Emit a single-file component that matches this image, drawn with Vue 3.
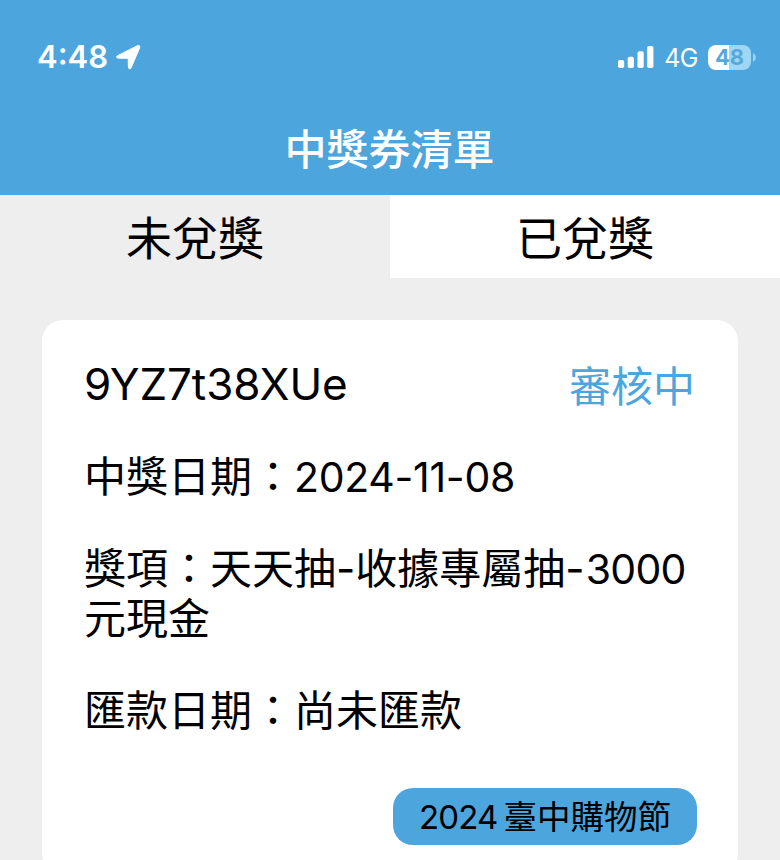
<template>
    <div class="page">
        <header class="header">
            <div class="status-bar">
                <div class="status-left">
                    <span class="clock">4:48</span>
                    <svg class="location" width="25" height="25" viewBox="0 0 25 25">
                        <path
                            d="M1.4 10.8 L21.2 0.8 Q24.6 -0.4 23.6 3 L15 23 Q13.4 25.4 12.4 22.4 L12.2 14.2 Q12.2 13.3 11.3 13.3 L2.2 13.2 Q-0.8 12.4 1.4 10.8 Z"
                            fill="#fff" stroke="#fff" stroke-width="1" stroke-linejoin="round" />
                    </svg>
                </div>
                <div class="status-right">
                    <svg class="signal" width="36" height="22" viewBox="0 0 36 22">
                        <rect x="0" y="14" width="6.2" height="8" rx="1.8" fill="#fff" />
                        <rect x="9.7" y="10.8" width="6.2" height="11.2" rx="1.8" fill="#fff" />
                        <rect x="19.5" y="5.2" width="6.2" height="16.8" rx="1.8" fill="#fff" />
                        <rect x="29.2" y="0" width="6.2" height="22" rx="1.8" fill="#fff" />
                    </svg>
                    <span class="network">4G</span>
                    <div class="battery">
                        <span class="battery-level">{{ battery }}</span>
                    </div>
                    <svg class="battery-cap" width="3" height="9" viewBox="0 0 3 9">
                        <path d="M0 0 Q2.8 1.6 2.8 4.5 Q2.8 7.4 0 9 Z" fill="#9ed7f3" />
                    </svg>
                </div>
            </div>
            <h1 class="title">中獎券清單</h1>
        </header>

        <nav class="tabs">
            <button v-for="t in tabs" :key="t.id" class="tab" :class="{ active: t.id === current }" type="button"
                @click="current = t.id">
                {{ t.label }}
            </button>
        </nav>

        <main class="list">
            <article class="ticket" v-for="ticket in tickets" :key="ticket.code">
                <div class="ticket-head">
                    <span class="code">{{ ticket.code }}</span>
                    <span class="state">{{ ticket.state }}</span>
                </div>
                <p class="line">中獎日期：<span class="date">{{ ticket.date }}</span></p>
                <p class="line">獎項：{{ ticket.prize }}<span class="amount">{{ ticket.amount }}</span>元現金</p>
                <p class="line">匯款日期：{{ ticket.remit }}</p>
                <div class="tag">
                    <span class="tag-year">2024</span>
                    <span>臺中購物節</span>
                </div>
            </article>
        </main>
    </div>
</template>

<script setup>

import { ref } from 'vue'

const battery = ref(48)
const current = ref("pending")

const tabs = [
    { id: "pending", label: "未兌獎" },
    { id: "redeemed", label: "已兌獎" }
]

const tickets = ref([
    {
        code: "9YZ7t38XUe",
        state: "審核中",
        date: "2024-11-08",
        prize: "天天抽-收據專屬抽-",
        amount: "3000",
        remit: "尚未匯款"
    }
])

</script>

<style>
body {
    margin: 0;
    background: #eeeeee;
}
</style>

<style scoped>
.page {
    height: 860px;
    overflow: hidden;
    background: #eeeeee;
    color: #000;
    font-family: Inter, "Noto Sans CJK TC", sans-serif;
}

.header {
    height: 195px;
    background: #4ca5dd;
    color: #fff;
}

.status-bar {
    height: 114px;
    padding: 0 24px 0 37px;
    display: flex;
    align-items: center;
    justify-content: space-between;
}

.status-left,
.status-right {
    display: flex;
    align-items: center;
}

.clock {
    font-size: 31px;
    font-weight: 600;
    line-height: 40px;
}

.location {
    margin-left: 8px;
}

.network {
    margin-left: 10px;
    padding-top: 2px;
    font-size: 25px;
    line-height: 30px;
    letter-spacing: -0.5px;
}

.battery {
    width: 43px;
    height: 25px;
    margin-left: 10px;
    border-radius: 8px;
    background: linear-gradient(to right, #fff 50%, #9ed7f3 50%);
    display: flex;
    align-items: center;
    justify-content: center;
}

.battery-level {
    font-size: 22px;
    font-weight: 700;
    line-height: 25px;
    color: #58a8db;
}

.battery-cap {
    margin-left: 2px;
}

.title {
    margin: 6px 0 0;
    padding-right: 1px;
    font-size: 42px;
    font-weight: 500;
    line-height: 60px;
    text-align: center;
}

.tabs {
    display: flex;
    height: 83px;
}

.tab {
    flex: 1;
    padding: 2px 0 0;
    border: none;
    background: #fff;
    color: #000;
    font-family: inherit;
    font-size: 46px;
    line-height: 80px;
    cursor: pointer;
}

.tab.active {
    background: #eeeeee;
}

.list {
    padding: 42px 42px 0;
}

.ticket {
    box-sizing: border-box;
    height: 554px;
    padding: 39px 41px 0 42px;
    border-radius: 21px;
    background: #fff;
}

.ticket-head {
    display: flex;
    align-items: center;
    justify-content: space-between;
    height: 50px;
}

.code {
    font-size: 44px;
    line-height: 50px;
    letter-spacing: -0.1px;
}

.state {
    padding: 6px 2px 0 0;
    font-size: 42px;
    line-height: 50px;
    color: #4ca5dd;
}

.line {
    margin: 42px 0 0;
    padding-top: 1px;
    font-size: 42px;
    line-height: 50px;
}

.line + .line {
    padding-top: 0;
}

.date {
    font-size: 41px;
    line-height: 1;
    letter-spacing: -0.3px;
}

.amount {
    margin-left: 1px;
    font-size: 41px;
    line-height: 1;
    letter-spacing: -0.7px;
}

.tag {
    box-sizing: border-box;
    width: 304px;
    height: 57px;
    margin: 52px 0 0 auto;
    border-radius: 20px;
    background: #4ca5dd;
    display: flex;
    align-items: center;
    justify-content: center;
    gap: 6px;
    font-size: 33.5px;
    line-height: 50px;
}

.tag-year {
    font-size: 33px;
    letter-spacing: -0.8px;
}
</style>
